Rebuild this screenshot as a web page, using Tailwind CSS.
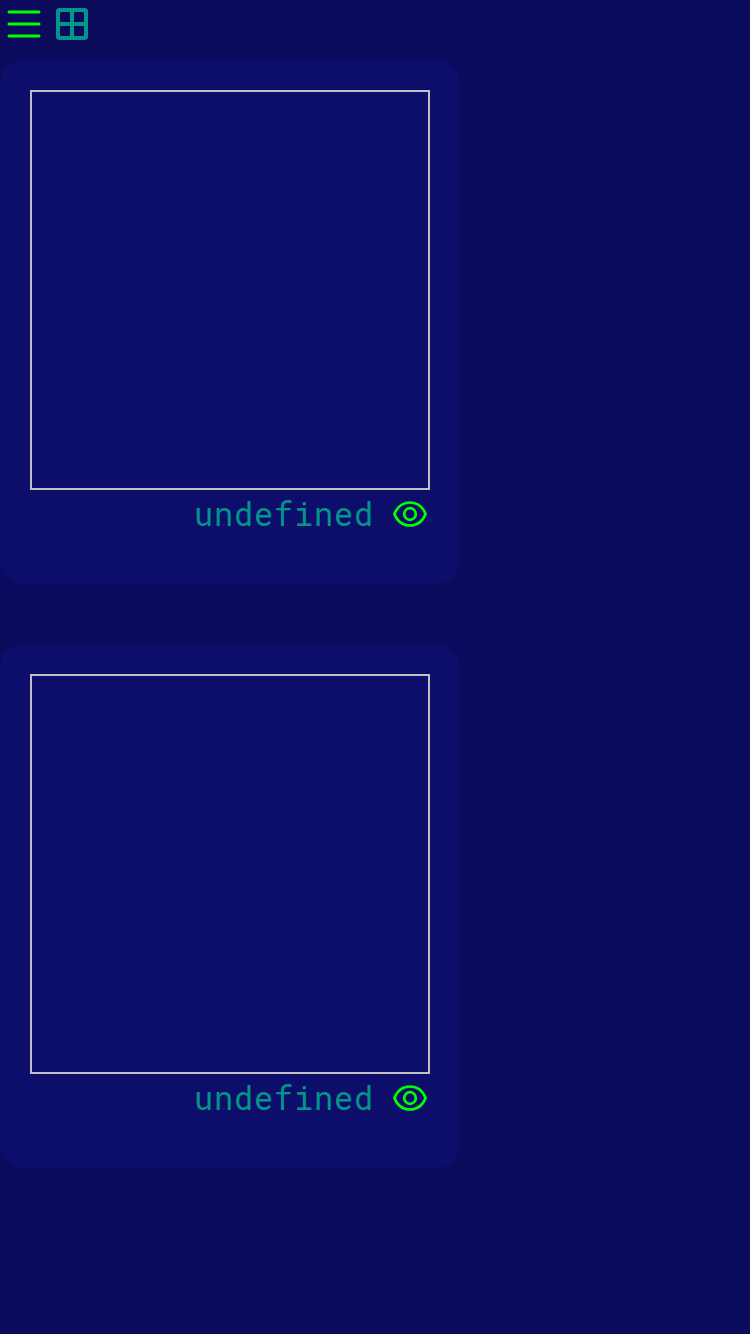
<!DOCTYPE html>
<html lang="en">
<head>
<meta charset="utf-8">
<title>Gallery</title>
<script src="https://cdn.jsdelivr.net/npm/@tailwindcss/browser@4"></script>
</head>
<body class="min-h-screen overflow-hidden bg-[#0b0b5e] font-['Roboto_Mono','Liberation_Mono',monospace] text-[#009688]">
<header class="flex h-[60px]">
  <svg class="size-12" viewBox="0 0 48 48" fill="none" stroke="#00ff00" stroke-width="3" stroke-linecap="round"><path d="M9 12H39M9 24H39M9 36H39"/></svg>
  <svg class="size-12" viewBox="0 0 48 48" fill="none" stroke="currentColor" stroke-width="4"><rect x="10" y="10" width="28" height="28" rx="1.500"/><path d="M24 10V38M10 24H38"/></svg>
</header>
<main class="flex flex-col gap-[60px]">
  <section class="h-[524px] w-[460px] rounded-3xl bg-[#0d0d6b] p-[30px]">
    <div class="h-[400px] border-2 border-[#c0c0c0]"></div>
    <div class="flex h-12 items-center justify-end gap-4">
      <span class="scale-y-[1.03] text-[32px] leading-[48px] tracking-[0.8px]">undefined</span>
      <svg class="size-10" viewBox="0 0 40 40" fill="none" stroke="#00ff00" stroke-width="2.700" stroke-linejoin="round"><path d="M4.400 20C7 13.500 12.500 8.500 20 8.500S33 13.500 35.600 20C33 26.500 27.500 31.500 20 31.500S7 26.500 4.400 20Z"/><circle cx="20" cy="20" r="5.800"/></svg>
    </div>
  </section>
  <section class="h-[524px] w-[460px] rounded-3xl bg-[#0d0d6b] p-[30px]">
    <div class="h-[400px] border-2 border-[#c0c0c0]"></div>
    <div class="flex h-12 items-center justify-end gap-4">
      <span class="scale-y-[1.03] text-[32px] leading-[48px] tracking-[0.8px]">undefined</span>
      <svg class="size-10" viewBox="0 0 40 40" fill="none" stroke="#00ff00" stroke-width="2.700" stroke-linejoin="round"><path d="M4.400 20C7 13.500 12.500 8.500 20 8.500S33 13.500 35.600 20C33 26.500 27.500 31.500 20 31.500S7 26.500 4.400 20Z"/><circle cx="20" cy="20" r="5.800"/></svg>
    </div>
  </section>
</main>
</body>
</html>
